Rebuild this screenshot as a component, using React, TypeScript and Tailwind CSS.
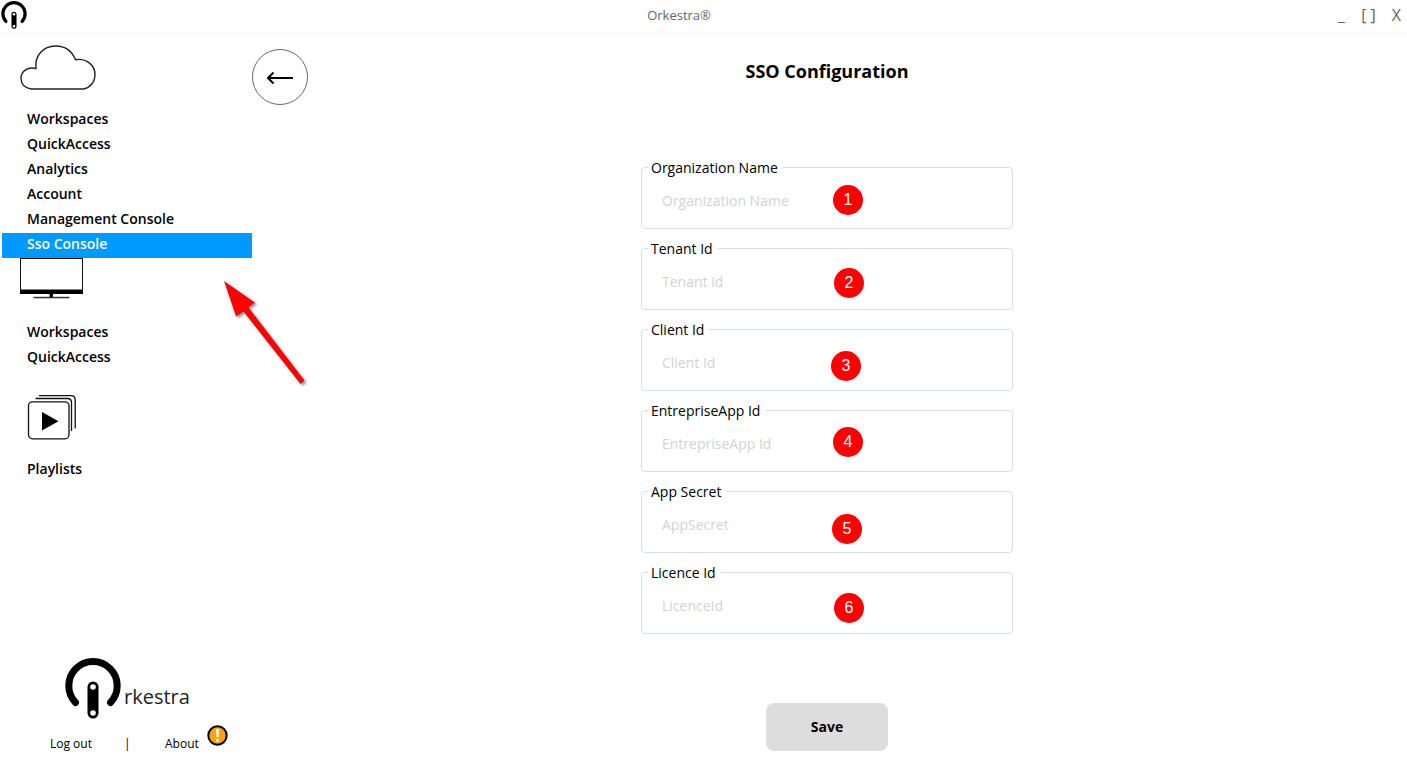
import React from "react";

type Field = { id: string; label: string; placeholder: string; badge: string };

const fields: Field[] = [
  { id: "org", label: "Organization Name", placeholder: "Organization Name", badge: "left-[191px] top-[7px]" },
  { id: "tenant", label: "Tenant Id", placeholder: "Tenant id", badge: "left-[192px] top-[9px]" },
  { id: "client", label: "Client Id", placeholder: "Client Id", badge: "left-[189px] top-[11px]" },
  { id: "app", label: "EntrepriseApp Id", placeholder: "EntrepriseApp Id", badge: "left-[191px] top-[6px]" },
  { id: "secret", label: "App Secret", placeholder: "AppSecret", badge: "left-[190px] top-[12px]" },
  { id: "licence", label: "Licence Id", placeholder: "LicenceId", badge: "left-[192px] top-[10px]" },
];

function Mark({ className }: { className: string }) {
  return (
    <svg viewBox="0 0 56 61" className={className} aria-hidden="true">
      <path d="M10.5 44.5A24.2 24.2 0 1 1 45.5 44.5" fill="none" stroke="#000" strokeWidth="7" strokeLinecap="round" />
      <rect x="22.5" y="23.5" width="11" height="37" rx="5.5" fill="#000" />
      <circle cx="28" cy="29" r="2.8" fill="#fff" />
      <circle cx="28" cy="55" r="2.8" fill="#fff" />
    </svg>
  );
}

function NavList({ items, active }: { items: string[]; active?: string }) {
  return (
    <ul className="pl-0.5">
      {items.map((item) => (
        <li key={item}>
          <a
            href="#"
            className={
              item === active
                ? "block h-[25px] bg-[#0099ff] pl-[25px] leading-[22px] font-semibold text-white"
                : "block h-[25px] pl-[25px] leading-[22px] font-semibold text-black"
            }
          >
            {item}
          </a>
        </li>
      ))}
    </ul>
  );
}

export default function App() {
  return (
    <div className="flex min-h-screen flex-col bg-white font-['Open_Sans','Noto_Sans',sans-serif] text-sm text-black">
      <header className="flex h-[34px] shrink-0 items-center justify-between border-b border-[#f7f7f7] pr-1.5 text-[#666]">
        <div className="flex flex-1 self-start pt-px pl-px">
          <Mark className="h-7 w-[26px]" />
        </div>
        <span className="pb-0.5 text-[13px]">Orkestra®</span>
        <div className="flex flex-1 justify-end gap-4 pb-1 pl-11 text-base">
          <button type="button" aria-label="Minimize">_</button>
          <button type="button" aria-label="Maximize">[ ]</button>
          <button type="button" aria-label="Close">X</button>
        </div>
      </header>

      <div className="flex grow">
        <aside className="relative flex w-[252px] shrink-0 flex-col">
          <svg viewBox="0 0 76 46" className="mt-[11px] ml-5 h-[46px] w-[76px]" fill="none" stroke="#222" strokeWidth="1.4" aria-hidden="true">
            <path d="M11 44C5 43 1 39 1 33.5C1 26.5 7 21.5 16 23.5C14.500 11 23 1 35.500 1C45 1 52 6 55.500 14.700C66 13 75 20 75 29.500C75 37 70.500 42.500 63.500 44Z" />
          </svg>
          <div className="pt-[17px]">
            <NavList
              items={["Workspaces", "QuickAccess", "Analytics", "Account", "Management Console", "Sso Console"]}
              active="Sso Console"
            />
          </div>
          <svg viewBox="0 0 63 41" className="ml-5 h-[41px] w-[63px]" aria-hidden="true">
            <rect x="0.5" y="0.5" width="62" height="34" fill="#fff" stroke="#111" />
            <rect x="0" y="31.500" width="63" height="4.500" fill="#000" />
            <rect x="29.500" y="35.500" width="3.500" height="4" fill="#000" />
            <rect x="13.500" y="38.800" width="36" height="1.500" fill="#333" />
          </svg>
          <div className="pt-[22px]">
            <NavList items={["Workspaces", "QuickAccess"]} />
          </div>
          <svg viewBox="0 0 50 46" className="mt-6 ml-[27px] h-[46px] w-[50px]" fill="none" stroke="#111" strokeWidth="1.300" aria-hidden="true">
            <rect x="1.500" y="6.800" width="40.500" height="37" rx="4" />
            <path d="M8.500 3.500H40.500Q44.500 3.500 44.500 7.500V36" />
            <path d="M12 0.700H44Q48.200 0.700 48.200 5V33.500" />
            <path d="M15 17V35.500L31.500 26.200Z" fill="#000" stroke="none" />
          </svg>
          <div className="pt-[17px]">
            <NavList items={["Playlists"]} />
          </div>

          <div className="mt-auto">
            <div className="flex items-end pl-[65px]">
              <Mark className="h-[61px] w-14" />
              <span className="pb-1.5 pl-[3px] font-['Open_Sans',sans-serif] text-xl leading-8 text-[#222]">rkestra</span>
            </div>
            <div className="flex h-[59px] items-start pl-[50px] text-xs leading-5">
              <a href="#" className="w-[74px] pt-[15px]">Log out</a>
              <span className="w-[41px] pt-[15px]">|</span>
              <a href="#" className="w-[42px] pt-[15px]">About</a>
              <svg viewBox="0 0 21 21" className="mt-[6px] size-[21px]" role="img" aria-label="Notice">
                <circle cx="10.500" cy="10.500" r="9.200" fill="#ffa410" stroke="#000" strokeWidth="2" />
                <path d="M9 4H12L11.500 12.200H9.500Z" fill="#fff" />
                <rect x="9.200" y="14" width="2.600" height="2.600" fill="#fff" />
              </svg>
            </div>
          </div>

          <svg viewBox="0 0 90 110" className="absolute top-[244px] left-[220px] z-10 h-[110px] w-[90px] drop-shadow-[2px_2px_1px_rgba(0,0,0,0.4)]" aria-hidden="true">
            <path d="M4 3L35 24.500L28.500 29.500L84.500 102.500L80.500 106L23.500 33.500L16 38.500Z" fill="#ff0000" />
          </svg>
        </aside>

        <main className="relative flex grow flex-col items-center pr-[5px]">
          <button
            type="button"
            aria-label="Back"
            className="absolute top-[15px] left-0 flex size-14 items-center justify-center rounded-full border border-[#666]"
          >
            <svg viewBox="0 0 28 14" className="mt-0.5 h-3.5 w-7" fill="none" stroke="#000" strokeWidth="2" aria-hidden="true">
              <path d="M27 7H2M7.500 1.500L2 7L7.500 12.500" />
            </svg>
          </button>
          <h1 className="pt-[23px] text-lg leading-7 font-bold">SSO Configuration</h1>

          <form className="flex flex-col items-center pt-[71px]" onSubmit={(e) => e.preventDefault()}>
            <div className="flex flex-col gap-2">
              {fields.map((f, i) => (
                <fieldset key={f.id} className="relative h-[73px] w-[372px] rounded border border-[#d5dfe5] px-1.5">
                  <legend className="pt-0.5 pr-[5px] pl-[3px] leading-5">
                    <label htmlFor={f.id}>{f.label}</label>
                  </legend>
                  <input
                    id={f.id}
                    type="text"
                    placeholder={f.placeholder}
                    className="block h-11 w-full bg-transparent px-3.5 outline-none placeholder:text-[#d3d3d3]"
                  />
                  <span
                    className={`absolute flex size-[30px] items-center justify-center rounded-full bg-[#ff0000] font-['Liberation_Sans',sans-serif] text-base text-white ${f.badge}`}
                  >
                    {i + 1}
                  </span>
                </fieldset>
              ))}
            </div>
            <button type="submit" className="mt-[69px] h-12 w-[122px] rounded-lg bg-[#ddd] font-bold">
              Save
            </button>
          </form>
        </main>
      </div>
    </div>
  );
}
